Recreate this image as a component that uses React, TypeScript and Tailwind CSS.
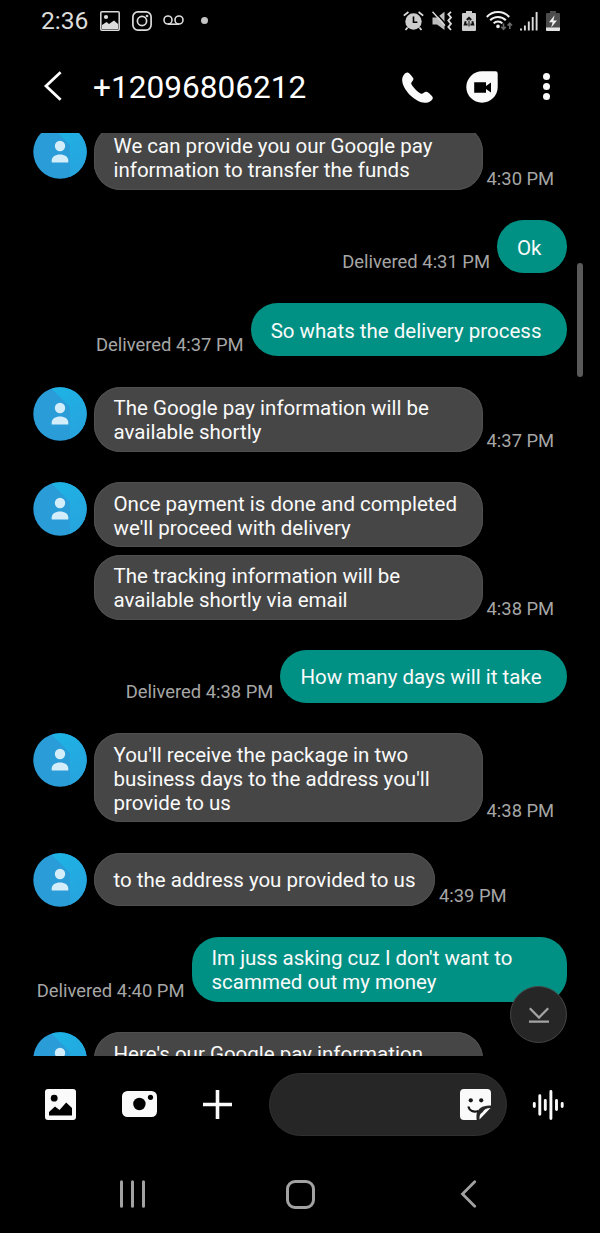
import type { ReactNode } from 'react';
import clsx from 'clsx';

type Message = {
  from: 'me' | 'them';
  bubbles: string[];
  time: string;
  width?: string;
};

const messages: Message[] = [
  {
    from: 'them',
    bubbles: ['We can provide you our Google pay\ninformation to transfer the funds'],
    time: '4:30 PM',
    width: 'w-[389.5px]',
  },
  { from: 'me', bubbles: ['Ok'], time: '4:31 PM' },
  { from: 'me', bubbles: ['So whats the delivery process'], time: '4:37 PM' },
  {
    from: 'them',
    bubbles: ['The Google pay information will be\navailable shortly'],
    time: '4:37 PM',
    width: 'w-[389.5px]',
  },
  {
    from: 'them',
    bubbles: [
      "Once payment is done and completed\nwe'll proceed with delivery",
      'The tracking information will be\navailable shortly via email',
    ],
    time: '4:38 PM',
    width: 'w-[389.5px]',
  },
  { from: 'me', bubbles: ['How many days will it take'], time: '4:38 PM' },
  {
    from: 'them',
    bubbles: ["You'll receive the package in two\nbusiness days to the address you'll\nprovide to us"],
    time: '4:38 PM',
    width: 'w-[389.5px]',
  },
  { from: 'them', bubbles: ['to the address you provided to us'], time: '4:39 PM' },
  {
    from: 'me',
    bubbles: ["Im juss asking cuz I don't want to\nscammed out my money"],
    time: '4:40 PM',
    width: 'w-[375px]',
  },
  {
    from: 'them',
    bubbles: ["Here's our Google pay information\n "],
    time: '',
    width: 'w-[389.5px]',
  },
];

function Avatar() {
  return (
    <svg viewBox="0 0 54 54" className="size-[54px] shrink-0">
      <defs>
        <clipPath id="avatar-clip">
          <circle cx="27" cy="27" r="26.7" />
        </clipPath>
        <linearGradient id="avatar-facet" x1="0" y1="0" x2="0.5" y2="1">
          <stop offset="0" stopColor="#1cb4e6" />
          <stop offset="1" stopColor="#27a4dd" />
        </linearGradient>
      </defs>
      <g clipPath="url(#avatar-clip)">
        <rect width="54" height="54" fill="#2a9cd8" />
        <path d="M17 0H54V54H37V20Z" fill="url(#avatar-facet)" />
      </g>
      <circle cx="27" cy="21" r="5.2" fill="#d3eefa" />
      <path d="M18.7 37.6V35.5C18.7 31.6 22.4 29.4 27 29.4S35.3 31.6 35.3 35.5V37.6Z" fill="#d3eefa" />
    </svg>
  );
}

function Bubble({ mine, className, children }: { mine: boolean; className?: string; children: ReactNode }) {
  return (
    <div
      className={clsx(
        'flex min-h-[53.2px] items-center whitespace-pre rounded-[26.6px] pb-[7.65px] pl-5 pt-[9.65px] text-[20.5px] leading-6 text-[#fafafa]',
        mine ? 'bg-[#009184] pr-[25px]' : 'bg-[#464646] pr-5 shadow-[inset_0_0_0_1px_#505050]',
        className,
      )}
    >
      {children}
    </div>
  );
}

function MessageRow({ message }: { message: Message }) {
  const mine = message.from === 'me';

  if (mine) {
    return (
      <div className="flex items-end justify-end gap-[7px] pr-[33.5px]">
        <span className="whitespace-nowrap text-[18.4px] leading-[22px] text-[#a6a6a6]">
          Delivered {message.time}
        </span>
        <Bubble mine className={message.width}>{message.bubbles[0]}</Bubble>
      </div>
    );
  }

  return (
    <div className="flex items-start pl-[33px]">
      <Avatar />
      <div className="ml-[6.5px] flex flex-col gap-[7.3px]">
        {message.bubbles.map((text) => (
          <Bubble key={text} mine={false} className={message.width}>{text}</Bubble>
        ))}
      </div>
      <span className="ml-[3.5px] self-end whitespace-nowrap text-[18.4px] leading-[22px] text-[#a6a6a6]">
        {message.time}
      </span>
    </div>
  );
}

function StatusBar() {
  return (
    <div className="flex h-[42px] shrink-0 items-center pl-[41px] pr-[40.5px] text-[#dcdcdc]">
      <span className="w-[59px] text-[24.6px] leading-none">2:36</span>
      {/* Gallery */}
      <svg viewBox="0 0 20 20" className="size-5">
        <rect x="0.8" y="0.8" width="18.4" height="18.4" rx="1" fill="none" stroke="currentColor" strokeWidth="1.5" />
        <circle cx="6" cy="6" r="2.1" fill="currentColor" />
        <path d="M2 14L6.5 11L9 13L14 9.5L18 13V18H2Z" fill="currentColor" />
      </svg>
      {/* Instagram */}
      <svg viewBox="0 0 20 20" className="ml-3 size-5" fill="none" stroke="currentColor" strokeWidth="1.7">
        <rect x="0.9" y="0.9" width="18.2" height="18.2" rx="5" />
        <circle cx="10" cy="10" r="4.6" />
        <circle cx="15" cy="5" r="0.5" />
      </svg>
      {/* Voicemail */}
      <svg viewBox="0 0 21 11" className="-mt-px ml-[10.5px] h-[11px] w-[21px]" fill="none" stroke="currentColor" strokeWidth="1.6">
        <circle cx="5" cy="5" r="4" />
        <circle cx="16" cy="5" r="4" />
        <path d="M5 9.2H16" />
      </svg>
      <span className="-mt-px ml-[17.5px] size-[7px] rounded-full bg-[#c4c4c4]" />

      <div className="ml-auto flex items-center">
        {/* Alarm */}
        <svg viewBox="0 0 21 20" className="h-5 w-[21px]">
          <path d="M0.8 4.6L5.4 1M15.6 1L20.2 4.6M4.6 16.5L2.5 19M16.4 16.5L18.5 19" stroke="currentColor" strokeWidth="1.8" fill="none" />
          <circle cx="10.5" cy="10.5" r="8.2" fill="#cdcdcd" />
          <path d="M10.5 5.5V11.2H14.4" stroke="#000" strokeWidth="1.6" fill="none" />
        </svg>
        {/* Vibrate */}
        <svg viewBox="0 0 21 20" className="ml-2 h-5 w-[21px]">
          <path d="M0.5 6.5H5L12.5 0.8V19L5 13.5H0.5Z" fill="#bdbdbd" />
          <path d="M1.5 -0.5L14 13.3" stroke="#000" strokeWidth="1.4" />
          <path d="M0.5 0.8L13 14.6" stroke="currentColor" strokeWidth="1.4" />
          <path d="M19 0.8L16.3 3.4L19 6.4L16.3 9.6L19 12.8L16.3 15.9L19 19" stroke="currentColor" strokeWidth="1.8" fill="none" />
        </svg>
        {/* Battery saver */}
        <svg viewBox="0 0 14 20" className="ml-[9px] h-5 w-3.5">
          <path d="M4 0H10V2H13A1 1 0 0 1 14 3V19A1 1 0 0 1 13 20H1A1 1 0 0 1 0 19V3A1 1 0 0 1 1 2H4Z" fill="#cdcdcd" />
          <path d="M4.8 9L7 6.8L9.2 9M3.7 10.2L2.8 13.6H5.6M10.3 10.2L11.2 13.6H8.4" stroke="#111" strokeWidth="2" fill="none" />
          <path d="M7 9.5V15.5" stroke="#111" strokeWidth="1.1" />
        </svg>
        {/* Wifi */}
        <svg viewBox="0 0 28 20" className="ml-[9.5px] h-5 w-7">
          <g fill="none" stroke="#eee" strokeWidth="2">
            <path d="M0.8 6C6.8 -0.6 17.2 -0.6 23.2 6" />
            <path d="M4.2 9.3C8.4 4.8 15.6 4.8 19.8 9.3" />
            <path d="M7.6 12.4C10 9.9 14 9.9 16.4 12.4" />
          </g>
          <circle cx="12" cy="15.4" r="1.8" fill="#eee" />
          <path d="M17.5 12.5V18M15.3 15.8L17.5 18.2L19.7 15.8M23.8 18V12.3M21.6 14.5L23.8 12.1L26 14.5" stroke="#6a6a6a" strokeWidth="1.6" fill="none" />
        </svg>
        {/* Signal */}
        <svg viewBox="0 0 18 20" className="ml-1.5 h-5 w-[18px]" stroke="currentColor" strokeWidth="1.9">
          <path d="M1 19.5V17.5M4.9 19.5V14.5M8.8 19.5V10.5M12.7 19.5V6M16.6 19.5V1" />
        </svg>
        {/* Charging */}
        <svg viewBox="0 0 14 20" className="ml-2 h-5 w-3.5">
          <path d="M4 0H10V2H13A1 1 0 0 1 14 3V19A1 1 0 0 1 13 20H1A1 1 0 0 1 0 19V3A1 1 0 0 1 1 2H4Z" fill="#4c4c4c" />
          <path d="M0 16.5H14V19A1 1 0 0 1 13 20H1A1 1 0 0 1 0 19Z" fill="#e4e4e4" />
          <path d="M8.6 4.2L3 11.2H6.6L5.2 16.4L11 9.4H7.4Z" fill="#f0f0f0" />
        </svg>
      </div>
    </div>
  );
}

function Header() {
  return (
    <header className="flex h-[91px] shrink-0 items-center pl-[43px] pr-[50px] text-white">
      <svg viewBox="0 0 20 30" className="-mt-[3px] h-[30px] w-5" fill="none" stroke="currentColor" strokeWidth="2.8">
        <path d="M17.6 1.3L3 14.9L17.6 28.8" />
      </svg>
      <h1 className="ml-[30px] text-[31.6px] leading-none">+12096806212</h1>
      <svg viewBox="3 3 18 18" className="-mt-px ml-auto size-[31px]" fill="#fafafa">
        <path d="M6.3 3.3C5 3 3.2 5.1 3.1 7.5C2.9 13 10.8 21 16.4 20.9C18.8 20.9 21.4 19 20.8 17.6C20.5 16.8 18.2 14.8 17.3 14.5C16.2 14.2 15.2 15.8 14.2 15.6C12.6 15.2 8.8 11.3 8.4 9.8C8.1 8.8 9.9 7.9 9.6 6.8C9.3 5.8 7.1 3.5 6.3 3.3Z" />
      </svg>
      <svg viewBox="0 0 32 32" className="-mt-0.5 ml-[33.5px] size-8">
        <path d="M16 0.3H29.5A2.2 2.2 0 0 1 31.7 2.5V16A15.7 15.7 0 1 1 16 0.3Z" fill="#fafafa" />
        <path d="M8.2 11.2H20V15L25 11.5V21.5L20 18V21.8H8.2Z" fill="#000" />
      </svg>
      <div className="-mt-0.5 ml-[45px] flex flex-col gap-[3px]">
        <span className="size-[7px] rounded-full bg-[#fafafa]" />
        <span className="size-[7px] rounded-full bg-[#fafafa]" />
        <span className="size-[7px] rounded-full bg-[#fafafa]" />
      </div>
    </header>
  );
}

function Composer() {
  return (
    <div className="flex h-[97px] shrink-0 items-center pl-[45px] pr-[35px]">
      {/* Gallery */}
      <svg viewBox="0 0 31 31" className="size-[31px]">
        <rect width="31" height="31" rx="3" fill="#fafafa" />
        <circle cx="9.2" cy="9.2" r="3.4" fill="#000" />
        <path d="M4 26.5V23L10 17.5L14.5 21L21.2 13.5L27 19V26.5Z" fill="#000" />
      </svg>
      {/* Camera */}
      <svg viewBox="0 0 35 26" className="-mt-px ml-[46px] h-[26px] w-[35px]">
        <rect width="35" height="26" rx="5.5" fill="#fafafa" />
        <circle cx="17.4" cy="13" r="6.2" fill="#000" />
        <circle cx="28.5" cy="6.3" r="2.6" fill="#000" />
      </svg>
      <svg viewBox="0 0 29 29" className="ml-[46px] size-[29px]" stroke="#fafafa" strokeWidth="3.6">
        <path d="M14.5 0V29M0 14.5H29" />
      </svg>
      <div className="ml-[37px] flex h-[63px] w-[237.5px] items-center justify-end rounded-full border border-[#303030] bg-[#262626] pr-[15px]">
        <svg viewBox="0 0 31 31" className="size-[31px]">
          <path d="M4 0H27A4 4 0 0 1 31 4V16.5C22 16 18.5 20 17 23.2C16.3 25.5 16.4 28 16.7 31H4A4 4 0 0 1 0 27V4A4 4 0 0 1 4 0Z" fill="#fafafa" />
          <path d="M19.5 30.5C19.3 27 19.8 24.5 22.5 23.3C24 20.5 26.5 19 30.5 19L19.5 30.5Z" fill="#fafafa" />
          <circle cx="10.8" cy="11.3" r="2.1" fill="#161616" />
          <circle cx="21.2" cy="11.3" r="2.1" fill="#161616" />
          <path d="M8.3 17.5C9.5 22 13.5 23.7 18.2 22" fill="none" stroke="#161616" strokeWidth="2.2" />
        </svg>
      </div>
      {/* Voice */}
      <svg viewBox="0 0 32 30" className="ml-[25.5px] h-[30px] w-8" stroke="#fafafa" strokeWidth="2.9" strokeLinecap="round">
        <path d="M2.3 13.4V16.6M7.8 5.7V24.3M13.3 10.4V19.6M18.9 1.5V28.5M24.5 10.4V19.6M30.2 13.4V16.6" />
      </svg>
    </div>
  );
}

function NavBar() {
  return (
    <nav className="flex h-20 shrink-0 items-center pl-[119px] pr-[123px] pt-0.5 text-[#a2a2a2]">
      <svg viewBox="0 0 28 28" className="size-7" stroke="currentColor" strokeWidth="3" strokeLinecap="round">
        <path d="M2.5 1.8V26.2M13.5 1.8V26.2M24.5 1.8V26.2" />
      </svg>
      <div className="ml-[139px] size-[29px] rounded-[9px] border-[3px] border-current" />
      <svg viewBox="0 0 17 28" className="ml-auto h-7 w-[17px]" fill="none" stroke="currentColor" strokeWidth="2.8" strokeLinecap="round">
        <path d="M14.7 1.8L2.5 14L14.7 26.2" />
      </svg>
    </nav>
  );
}

export default function App() {
  return (
    <div className="flex h-[1233px] w-[600px] flex-col overflow-hidden bg-black font-['Roboto',sans-serif]">
      <StatusBar />
      <Header />

      <main className="relative h-[923px] shrink-0 overflow-hidden">
        <div className="-mt-[8.4px] flex flex-col gap-[30.1px]">
          {messages.map((message) => (
            <MessageRow key={message.bubbles[0]} message={message} />
          ))}
        </div>

        {/* Scroll thumb */}
        <div className="absolute right-[17px] top-[130px] h-[114px] w-[6px] rounded-full bg-[#5a5a5a]" />

        {/* Jump to latest */}
        <button className="absolute right-[33px] top-[853px] flex size-[57px] items-center justify-center rounded-full border border-[#454545] bg-[#262626]">
          <svg viewBox="0 0 20 17" className="mt-0.5 h-[17px] w-5" fill="none" stroke="#a4a4a4" strokeWidth="2.2">
            <path d="M0.8 1.2L10 10.6L19.2 1.2M0 14.7H20" />
          </svg>
        </button>
      </main>

      <Composer />
      <NavBar />
    </div>
  );
}
